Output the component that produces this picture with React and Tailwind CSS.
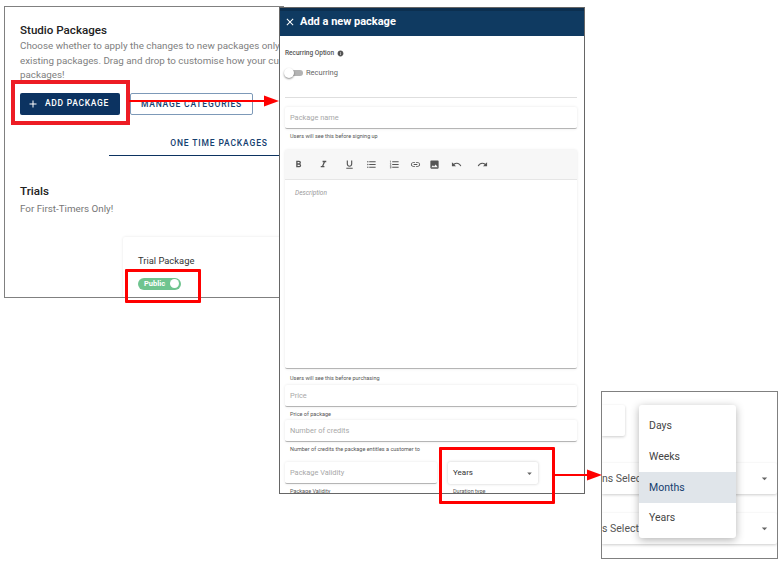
import {
  MdAdd,
  MdArrowDropDown,
  MdClose,
  MdFormatBold,
  MdFormatItalic,
  MdFormatListBulleted,
  MdFormatListNumbered,
  MdFormatUnderlined,
  MdImage,
  MdInfo,
  MdLink,
  MdRedo,
  MdUndo,
} from "react-icons/md";

const toolbar = [
  { Icon: MdFormatBold, cls: "ml-[8px]" },
  { Icon: MdFormatItalic, cls: "ml-[14px]" },
  { Icon: MdFormatUnderlined, cls: "ml-[15px]" },
  { Icon: MdFormatListBulleted, cls: "ml-[11px]" },
  { Icon: MdFormatListNumbered, cls: "ml-[12px]" },
  { Icon: MdLink, cls: "ml-[10px]" },
  { Icon: MdImage, cls: "ml-[8px]" },
  { Icon: MdUndo, cls: "ml-[11px]" },
  { Icon: MdRedo, cls: "ml-[15px]" },
];

function Field({ placeholder, help, className = "" }) {
  return (
    <div className={className}>
      <div className="h-[22px] rounded-[2px] bg-white border-b border-[#b5b5b5] shadow-[0_0_3px_rgba(0,0,0,0.1)] pl-[5px] flex items-center text-[7.4px] text-[#a8a8a8]">
        {placeholder}
      </div>
      <p className="pl-[5px] mt-[3px] h-[9px] leading-[9px] text-[5.5px] text-[#555]">{help}</p>
    </div>
  );
}

function Arrow({ className, width }) {
  return (
    <svg className={className} width={width} height="12" viewBox={`0 0 ${width} 12`}>
      <rect x="0" y="5" width={width - 12} height="2" fill="#f00" />
      <polygon points={`${width - 15},0.5 ${width},6 ${width - 15},11.5`} fill="#f00" />
    </svg>
  );
}

export default function App() {
  return (
    <div className="relative w-[781px] h-[562px] bg-white overflow-hidden font-['Roboto',sans-serif]">
      {/* first screenshot: packages page */}
      <section className="absolute left-[4px] top-[6px] w-[280px] h-[292px] border border-[#808080] overflow-hidden bg-white pl-[15px] pt-[16px]">
        <h2 className="text-[11.6px] leading-[15px] font-medium text-[#222]">Studio Packages</h2>
        <p className="w-[290px] mt-[1px] text-[9.8px] leading-[14.5px] text-[#808080]">
          Choose whether to apply the changes to new packages only
          <br />
          existing packages. Drag and drop to customise how your cu
          <br />
          packages!
        </p>
        <div className="flex gap-[10px] mt-[10px]">
          <button className="w-[100px] h-[22px] pr-[4px] rounded-[2px] bg-[#0c3361] text-white text-[8.5px] font-medium tracking-[0.7px] flex items-center justify-center gap-[6px]">
            <MdAdd className="text-[12px]" />
            ADD PACKAGE
          </button>
          <button className="w-[123px] h-[22px] pt-px rounded-[2px] border border-[#7d99b8] text-[#15406f] text-[8.5px] font-medium tracking-[0.8px]">
            MANAGE CATEGORIES
          </button>
        </div>
        <div className="ml-[89px] mt-[10px] h-[31px] border-b border-[#0c3361] pt-[12px]">
          <span className="block w-[220px] text-center text-[8.5px] leading-[12px] font-medium tracking-[0.85px] text-[#15406f]">
            ONE TIME PACKAGES
          </span>
        </div>
        <h2 className="mt-[28px] text-[11.6px] leading-[15px] font-medium text-[#222]">Trials</h2>
        <p className="mt-[4px] text-[9.8px] leading-[12px] text-[#777]">For First-Timers Only!</p>
        <div className="ml-[103px] mt-[22px] h-[80px] rounded-[2px] shadow-[0_0_3px_rgba(0,0,0,0.1)] pl-[15px] pt-[18px]">
          <p className="text-[9.4px] leading-[12px] text-[#333]">Trial Package</p>
          <div className="mt-[11px] w-[43px] h-[12px] rounded-full bg-[#6fc48f] flex items-center justify-between pl-[6px] pr-[2px]">
            <span className="text-[7.5px] font-bold text-white">Public</span>
            <span className="w-[9px] h-[9px] rounded-full bg-white" />
          </div>
        </div>
      </section>

      {/* second screenshot: add package drawer */}
      <section className="absolute left-[279px] top-[7px] w-[306px] h-[487px] border border-[#666] overflow-hidden bg-white">
        <header className="h-[28px] bg-[#0f3a61] border-t-[3px] border-[#0c2f4f] pb-[3px] flex items-center pl-[4px] gap-[4px] text-white">
          <MdClose className="text-[12px]" />
          <h3 className="text-[11px] font-bold">Add a new package</h3>
        </header>
        <div className="pl-[5px] pr-[7px]">
          <div className="mt-[13px] flex items-center gap-[3px] text-[6.5px] leading-[9px] font-medium text-[#555]">
            Recurring Option
            <MdInfo className="text-[7px]" />
          </div>
          <div className="mt-[10px] flex items-center gap-[3px] text-[7.5px] leading-[10px] text-[#666]">
            <span className="relative w-[18px] h-[6px] rounded-full bg-[#b3b3b3]">
              <span className="absolute -left-px -top-[2px] w-[10px] h-[10px] rounded-full bg-white shadow-[0_1px_2px_rgba(0,0,0,0.45)]" />
            </span>
            Recurring
          </div>
          <div className="mt-[19px] border-t border-[#dedede]" />
          <Field className="mt-[9px]" placeholder="Package name" help="Users will see this before signing up" />
          <div className="mt-[9px] h-[219px] rounded-[2px] border-b border-[#b5b5b5] shadow-[0_0_3px_rgba(0,0,0,0.1)] flex flex-col">
            <div className="h-[30px] shrink-0 bg-[#f7f7f7] border-b border-[#e6e6e6] flex items-center text-[#555] text-[11px]">
              {toolbar.map(({ Icon, cls }, i) => (
                <Icon key={i} className={cls} />
              ))}
            </div>
            <p className="pl-[10px] pt-[9px] text-[6.5px] leading-[9px] italic text-[#999]">Description</p>
          </div>
          <p className="pl-[5px] mt-[5px] h-[9px] leading-[9px] text-[5.5px] text-[#555]">Users will see this before purchasing</p>
          <Field className="mt-[2px]" placeholder="Price" help="Price of package" />
          <Field className="mt-[1px]" placeholder="Number of credits" help="Number of credits the package entitles a customer to" />
          <div className="mt-[8px] flex">
            <Field className="w-[152px]" placeholder="Package Validity" help="Package Validity" />
            <div className="ml-[11px] w-[90px]">
              <div className="h-[22px] rounded-[2px] bg-white shadow-[0_0_3px_rgba(0,0,0,0.22)] pl-[5px] pr-[3px] flex items-center justify-between text-[8px] text-[#333]">
                Years
                <MdArrowDropDown className="text-[11px] text-[#666]" />
              </div>
              <p className="pl-[5px] mt-[3px] leading-[9px] text-[5.5px] text-[#555]">Duration type</p>
            </div>
          </div>
        </div>
      </section>

      {/* third screenshot: duration menu */}
      <section className="absolute left-[601px] top-[391px] w-[177px] h-[168px] border border-[#808080] overflow-hidden bg-white">
        <div className="w-[23px] h-[31px] mt-[13px] rounded-r-[2px] shadow-[0_1px_3px_rgba(0,0,0,0.2)]" />
        <div className="mt-[27px] w-[175px] h-[31px] rounded-r-[2px] shadow-[0_1px_3px_rgba(0,0,0,0.2)] flex items-center justify-between pr-[6px] text-[10.5px] text-[#555]">
          <span>ns Selected</span>
          <MdArrowDropDown className="text-[13px] text-[#666]" />
        </div>
        <div className="mt-[19px] w-[175px] h-[31px] rounded-r-[2px] shadow-[0_1px_3px_rgba(0,0,0,0.2)] flex items-center justify-between pr-[6px] text-[10.5px] text-[#555]">
          <span>s Selected</span>
          <MdArrowDropDown className="text-[13px] text-[#666]" />
        </div>
        <ul className="absolute left-[37px] top-[13px] w-[97px] h-[133px] rounded-[3px] bg-white shadow-[0_2px_8px_rgba(0,0,0,0.3)] text-[10.5px] text-[#444] pt-[6px]">
          <li className="h-[30.5px] pl-[10px] flex items-center">Days</li>
          <li className="h-[30.5px] pl-[10px] flex items-center">Weeks</li>
          <li className="h-[30.5px] pl-[10px] pt-px flex items-center bg-[#e0e5ea] text-[#15406f]">Months</li>
          <li className="h-[30.5px] pl-[10px] flex items-center">Years</li>
        </ul>
      </section>

      {/* red callouts */}
      <div className="absolute left-[11px] top-[80px] w-[119px] h-[45px] border-[4px] border-[#ed1c24]" />
      <div className="absolute left-[125px] top-[269px] w-[76px] h-[34px] border-[3px] border-[#f00] rounded-[1px]" />
      <div className="absolute left-[439px] top-[447px] w-[116px] h-[57px] border-[3px] border-[#f00] rounded-[1px]" />
      <Arrow className="absolute left-[129px] top-[95px]" width={150} />
      <Arrow className="absolute left-[554px] top-[469px]" width={48} />
    </div>
  );
}
